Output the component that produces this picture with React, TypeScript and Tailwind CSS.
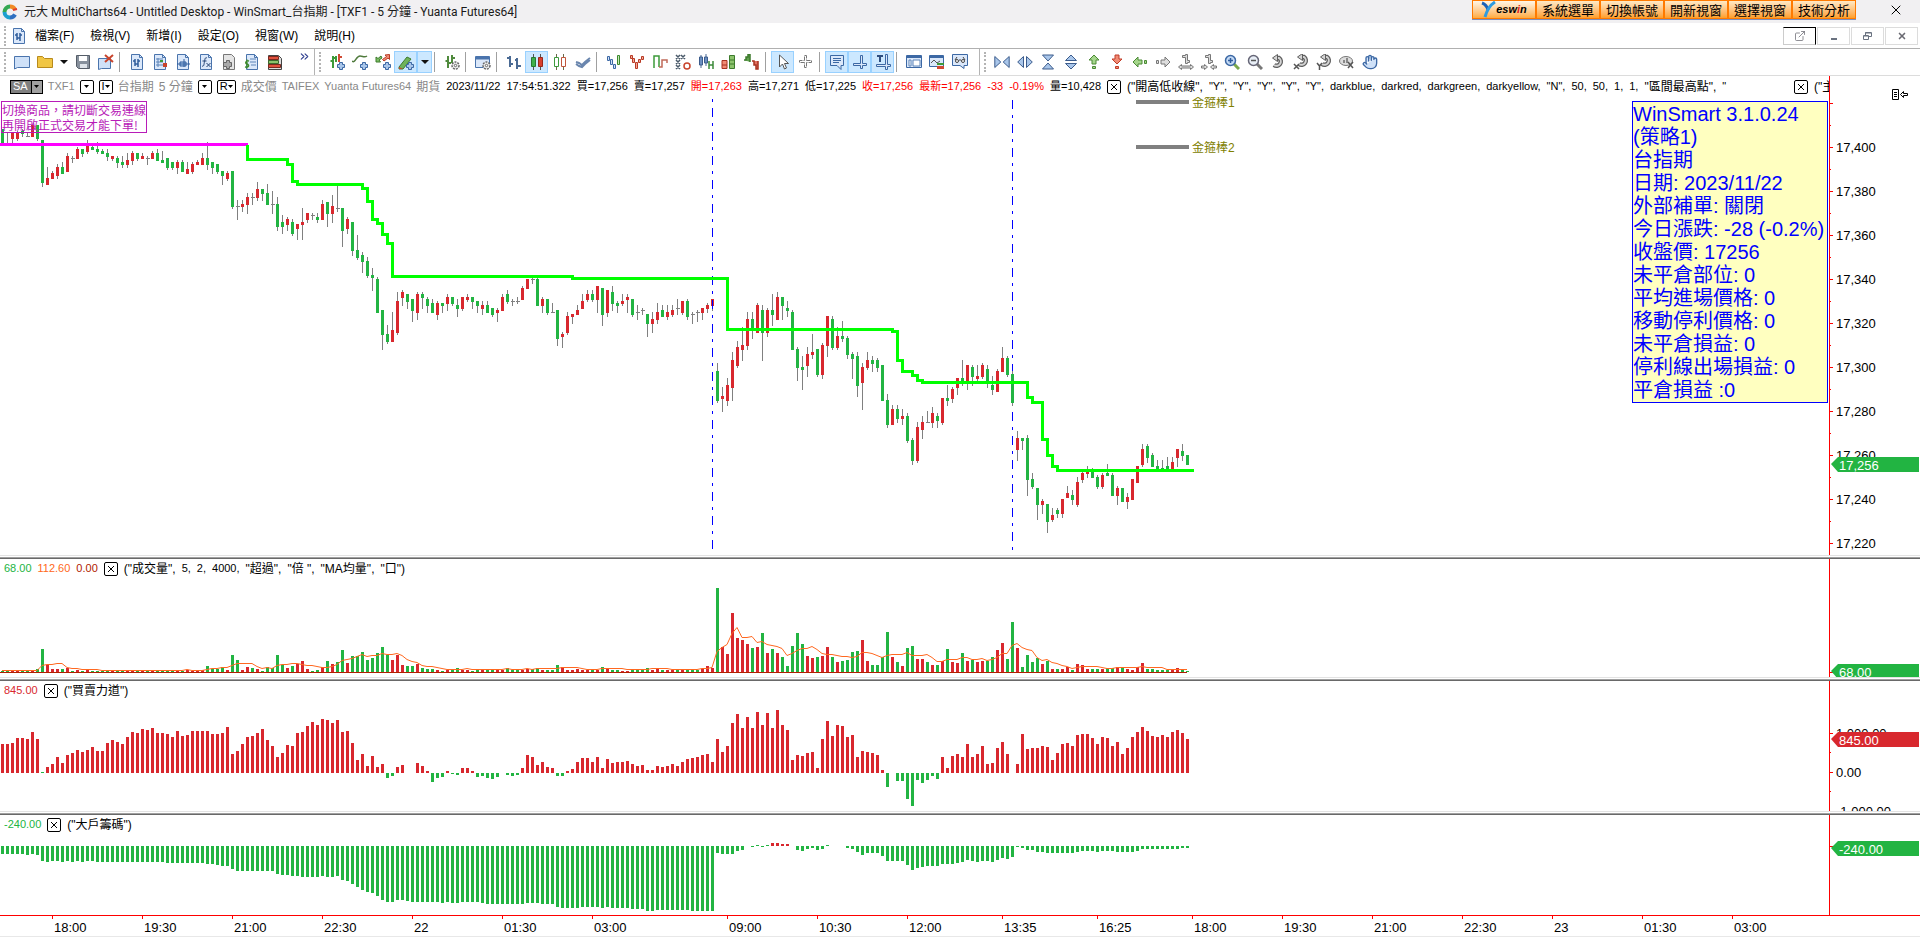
import React from 'react'
import { ChevronsRight, ExternalLink, Hand, X } from 'lucide-react'

const UP = '#d8282e'
const DOWN = '#22b442'
const STEP = 5
const AXIS_FONT = { fontFamily: '"Liberation Sans", Arial, sans-serif', fontSize: 13 }

/* ---------- data ---------- */

// Each bar: colour (r/g/d for doji), high, body top, body bottom, low, in thirds of a pixel below `base`
const CANDLE_RUNS = [
    {
        base: 120,
        bars: `g28,28,72,72 d35,68,68,70 r38,38,57,70 r33,38,57,62 g28,33,42,50 d35,49,49,50 r15,15,50,50 g15,15,57,63 g60,60,189,201 r140,174,195,195
r153,159,177,177 r132,141,168,177 g126,141,162,162 r99,108,156,156 d108,115,115,128 r81,87,117,117 g87,87,102,110 r60,76,96,102 g76,81,90,90 g66,87,96,102
g87,93,102,102 g87,99,111,123 r108,108,117,122 g108,114,129,144 g108,126,135,144 r99,120,135,144 r93,99,123,135 g99,99,117,123 r99,108,117,117 d108,115,115,135
r93,99,117,117 g87,99,123,123 g93,120,129,129 g114,114,144,150 g126,126,144,150 r120,126,144,162 g120,126,156,156 r126,147,162,162 r126,132,156,162 r120,126,135,135
r99,114,135,135 g66,114,135,150 g126,126,144,162 g132,132,156,162 g153,153,168,195 r153,159,177,183 g153,153,261,267 d240,259,259,300 r240,252,261,276 r219,231,255,282
d219,232,232,255 r186,207,234,243 g207,207,222,243 g192,219,255,255 d213,253,253,282 g231,252,321,333 g285,306,321,342 r291,297,315,333 g297,306,342,348 r312,312,327,360
r264,306,315,360 r279,279,300,309 d279,286,286,300 g279,291,300,308 r240,252,300,300 g246,246,282,321 r225,258,282,309 d195,265,265,276 g264,264,333,381 r291,297,327,342
g306,306,393,408 g345,390,414,420 g396,405,426,459 g411,423,468,474 g444,465,474,513 g471,477,579,579 g570,570,645,690 g615,642,666,672 r576,630,666,666 r516,543,639,645
r510,516,534,558 g522,522,546,567 g537,537,573,606 r516,522,579,600`,
    },
    {
        base: 220,
        bars: `g216,222,234,267 g231,237,258,279 g237,249,279,279 r243,249,285,300 g249,249,258,279 r222,231,252,273 g231,231,252,258 g237,255,267,291 r231,231,267,273 r222,231,240,246
g231,231,246,267 g243,243,258,279 r243,255,267,285 g243,255,279,279 g264,264,285,291 r264,270,279,306 r222,231,273,273 g210,222,246,252 d237,244,244,258 d231,244,244,252
r198,204,240,240 r177,177,207,207 d174,178,178,192 g174,177,258,258 r231,237,258,279 g237,237,279,285 d249,277,277,279 g270,270,357,378 r336,342,351,384 r276,288,339,345
r282,282,291,312 r255,270,285,285 r222,243,267,267 r210,222,240,246 g210,222,240,246 r198,198,240,279 g204,204,285,318 r210,210,279,291 g198,216,252,273 g243,249,258,279
r222,243,252,258 r222,231,240,279 g237,237,285,291 d255,277,277,300 d264,271,271,285 g282,282,312,351 r276,297,312,339 r249,276,300,312 g255,270,291,291 r255,276,291,300
r255,270,285,291 d237,265,265,285 r243,243,279,285 g237,243,291,300 d276,283,283,312 d270,277,277,306 r264,264,279,300 r249,255,267,279 r237,237,258,272 g429,453,543,549
r501,528,537,576 r474,495,543,558 r396,420,504,543 r363,381,438,444`,
    },
    {
        base: 240,
        bars: `r261,315,330,363 r216,237,318,330 g216,237,270,297 r189,195,279,279 g195,210,279,363 r204,210,279,291 g162,210,225,258 r156,171,240,240 g171,171,198,240 g183,204,213,231
g210,216,330,330 g321,327,384,423 g348,381,390,450 r321,342,378,411 r282,336,345,357 g327,327,405,411 r309,315,405,417 r228,228,318,351 g228,237,324,330 r261,288,324,330
g243,288,297,306 g288,294,345,357 g336,342,357,417 g336,348,438,471 r369,381,429,510 r336,360,384,390 g348,360,372,396 g354,360,384,396 g375,375,483,483 g462,480,555,564
r495,507,555,555 g495,507,537,549 r507,528,537,555 g519,528,603,609 g594,600,663,675 r546,561,663,669 r528,546,570,597 d513,547,547,549 r501,519,549,564 g519,528,543,564
r474,474,549,555 g435,474,483,498 r441,447,477,489 r414,414,444,465 g360,414,423,438 r375,375,429,450 g375,381,411,438 r375,408,417,423 r369,375,411,417 g375,387,426,444
g408,435,450,465 r387,393,456,456 r321,354,396,396 g348,354,405,411 g393,402,489,498 r573,594,630,663 g594,594,603,630 g585,594,720,768 g699,717,741,747 g744,744,795,840
r777,783,795,822 g792,792,846,879 r804,825,840,846 g804,810,822,834 r777,777,822,834 r738,759,774,774 g750,765,780,795 r711,726,795,801 r693,699,720,729 r678,693,702,714
g684,693,714,714 g705,711,741,747 r699,705,741,747 g672,699,708,708 g699,705,768,768 r738,744,768,795 g744,744,786,786 r759,771,786,807 r717,717,780,780 r678,678,729,729
r612,627,675,681 g612,618,654,669 g639,645,681,681 g660,678,693,693 g660,684,693,693 g651,678,693,693 r651,666,690,690 r627,627,654,681 g612,633,648,663 g645,645,675,675`,
    },
]

const CANDLES = CANDLE_RUNS.flatMap(({ base, bars }) =>
    bars.split(/\s+/).map((bar) => {
        const [high, top, bottom, low] = bar.slice(1).split(',').map((v) => Math.round(base + Number(v) / 3))
        return { kind: bar[0], high, top, bottom, low }
    })
)

const VOLUME = [
    1, 1, 1, 1, 1, 1, 1, 3, 23, 7, 3, 3, 3, 4, 1, 2, 1, 3, 1, 1, 1, 1, 1, 2, 2, 1, 1, 1, 1, 1, 1, 1, 1, 2, 1, 2, 1, 2, 1, 1,
    2, 6, 3, 3, 5, 2, 17, 12, 2, 5, 4, 3, 1, 5, 4, 17, 7, 4, 6, 8, 11, 3, 1, 2, 5, 11, 8, 10, 22, 9, 16, 16, 20, 12, 14, 19, 25, 17, 12, 17,
    7, 6, 6, 8, 4, 3, 3, 2, 1, 2, 3, 4, 2, 2, 1, 2, 2, 3, 2, 2, 2, 4, 2, 2, 2, 3, 3, 4, 2, 2, 2, 7, 5, 2, 2, 3, 2, 2, 2, 2,
    5, 3, 2, 2, 1, 1, 3, 2, 2, 4, 2, 4, 2, 2, 2, 2, 2, 3, 3, 2, 3, 6, 4, 84, 25, 18, 59, 34, 32, 28, 24, 25, 39, 19, 23, 19, 15, 6, 26, 39,
    28, 16, 14, 15, 16, 25, 15, 10, 11, 12, 20, 21, 32, 11, 7, 7, 15, 40, 15, 10, 6, 24, 26, 13, 13, 10, 7, 7, 11, 23, 10, 9, 19, 11, 12, 10, 11, 11, 15, 22,
    29, 13, 50, 24, 5, 17, 10, 14, 8, 11, 3, 3, 3, 5, 2, 8, 7, 3, 3, 3, 3, 4, 4, 5, 4, 3, 2, 5, 9, 3, 3, 2, 2, 2, 2, 4, 2, 1,
]

const FORCE = [
    29, 29, 30, 35, 35, 34, 41, 34, 1, 6, 9, 16, 10, 18, 20, 23, 21, 23, 26, 22, 22, 30, 33, 31, 29, 36, 41, 40, 44, 43, 45, 40, 40, 39, 36, 42, 37, 38, 42, 42,
    42, 42, 39, 39, 40, 46, 19, 22, 29, 36, 37, 40, 44, 33, 27, 16, 20, 28, 27, 40, 41, 47, 51, 48, 54, 53, 50, 53, 41, 42, 30, 13, 19, 7, 17, 6, 9, -5, -3, 6,
    8, 0, 0, 10, 7, 2, -9, -5, -4, 2, -1, -2, 5, 5, 2, -4, -3, -5, -6, -4, 0, -2, -3, -2, 5, 18, 16, 8, 11, 6, 5, -3, -3, 2, 4, 11, 15, 15, 11, 16,
    5, 14, 10, 11, 11, 12, 9, 7, 8, 3, 3, 7, 6, 7, 9, 7, 11, 14, 15, 16, 18, 19, 11, 34, 21, 27, 50, 59, 45, 56, 45, 61, 48, 60, 45, 63, 48, 43, 13, 18,
    17, 20, 21, 5, 34, 52, 37, 48, 47, 36, 38, 16, 22, 21, 20, 18, 3, -14, 0, -8, -8, -26, -33, -7, -10, -7, -3, -6, 16, 5, 17, 19, 16, 29, 16, 19, 27, 9, 10, 25,
    31, 19, 0, 9, 39, 24, 25, 25, 27, 26, 13, 20, 29, 30, 27, 38, 39, 39, 35, 29, 36, 35, 27, 31, 19, 25, 36, 41, 46, 42, 37, 36, 38, 36, 41, 43, 40, 34,
]

const CHIPS = [
    8, 8, 8, 8, 8, 9, 8, 9, 15, 16, 15, 15, 16, 15, 16, 15, 16, 15, 15, 16, 16, 16, 16, 16, 16, 16, 16, 16, 16, 16, 16, 16, 16, 17, 17, 17, 17, 17, 17, 17,
    17, 18, 18, 19, 20, 20, 23, 25, 25, 25, 25, 25, 25, 25, 25, 28, 29, 29, 30, 30, 31, 31, 31, 31, 30, 31, 31, 30, 34, 35, 38, 41, 44, 46, 47, 50, 54, 56, 56, 54,
    54, 55, 56, 56, 56, 56, 56, 56, 57, 56, 57, 57, 56, 56, 56, 56, 57, 58, 58, 58, 58, 58, 58, 58, 58, 57, 57, 57, 58, 58, 58, 61, 62, 62, 62, 62, 61, 61, 61, 61,
    62, 61, 62, 62, 62, 62, 63, 63, 63, 65, 65, 64, 64, 64, 64, 64, 64, 64, 65, 65, 65, 65, 65, 7, 8, 8, 8, 5, 4, 0, 1, -1, 1, -1, -3, -3, -2, -2, 0, 4,
    5, 3, 2, 4, 3, -1, 0, 0, 0, 2, 3, 6, 9, 7, 7, 7, 10, 15, 15, 15, 15, 19, 24, 22, 21, 20, 20, 20, 18, 18, 18, 17, 16, 14, 15, 16, 15, 15, 16, 14,
    12, 13, 11, 1, 2, 4, 4, 6, 6, 7, 7, 7, 7, 7, 7, 6, 5, 5, 5, 6, 5, 5, 5, 6, 6, 6, 6, 5, 3, 3, 3, 3, 3, 3, 3, 3, 2, 2,
]

const STOP_LINE: [number, number][] = [
    [247, 144], [247, 159], [287, 159], [287, 164], [292, 164], [292, 181], [297, 181], [297, 184], [362, 184], [362, 188], [367, 188],
    [367, 201], [372, 201], [372, 219], [377, 219], [377, 223], [382, 223], [382, 234], [387, 234], [387, 243], [392, 243], [392, 276],
    [572, 276], [572, 278], [727, 278], [727, 329], [892, 329], [892, 331], [897, 331], [897, 360], [902, 360], [902, 371], [912, 371],
    [912, 375], [917, 375], [917, 380], [922, 380], [922, 382], [1027, 382], [1027, 397], [1032, 397], [1032, 402], [1042, 402],
    [1042, 439], [1047, 439], [1047, 455], [1052, 455], [1052, 466], [1057, 466], [1057, 470], [1193, 470],
]

const TIMES: [number, string][] = [
    [52, '18:00'], [142, '19:30'], [232, '21:00'], [322, '22:30'], [412, '22'], [502, '01:30'], [592, '03:00'], [727, '09:00'], [817, '10:30'],
    [907, '12:00'], [1002, '13:35'], [1097, '16:25'], [1192, '18:00'], [1282, '19:30'], [1372, '21:00'], [1462, '22:30'], [1552, '23'],
    [1642, '01:30'], [1732, '03:00'],
]

const INFO_LINES = [
    'WinSmart 3.1.0.24', '(策略1)', '台指期', '日期: 2023/11/22', '外部補單: 關閉', '今日漲跌: -28 (-0.2%)', '收盤價: 17256',
    '未平倉部位: 0', '平均進場價格: 0', '移動停利價格: 0', '未平倉損益: 0', '停利線出場損益: 0', '平倉損益 :0',
]

/* ---------- toolbar icons ---------- */

const page = (
    <>
        <path d="M2.5.5h8l3 3v12h-11z" fill="#dbe8fa" stroke="#4a74ad" />
        <path d="M10.5.5v3h3" fill="none" stroke="#4a74ad" />
    </>
)
const plus = <path d="M10.5 8.5h3v2h2v3h-2v2h-3v-2h-2v-3h2z" fill="#a9c6ea" stroke="#3c68a4" />
const gear = (
    <>
        <circle cx="11.5" cy="11.5" r="3.5" fill="#eee" stroke="#666" strokeDasharray="2 1" strokeWidth="1.5" />
        <circle cx="11.5" cy="11.5" r="1.2" fill="#fff" stroke="#666" />
    </>
)
const rotate = (
    <g fill="none">
        <path d="M6 4h3a4 4 0 1 1-5 7" stroke="#5f5f5f" strokeWidth="4.500" />
        <path d="M6 4h3a4 4 0 1 1-5 7" stroke="#d4d4d4" strokeWidth="2" />
        <path d="M7.500.500v7L2.500 4z" fill="#d4d4d4" stroke="#5f5f5f" />
    </g>
)
const lens = (
    <>
        <path d="M10 10l5 5" stroke="#777" strokeWidth="3" />
        <circle cx="6.5" cy="6.5" r="5" fill="#e8eef6" stroke="#667" strokeWidth="1.5" />
    </>
)

const ICONS: Record<string, React.ReactNode> = {
    workspace: <path d="M.5 2.5h15v11H3.5l-3 1.5z" fill="#cfe1f8" stroke="#4a74ad" />,
    folder: <path d="M.5 2.5h5l2 2h8v9H.5z" fill="#f1c644" stroke="#b88a1c" />,
    save: (
        <>
            <path d="M1.5 1.5h13v13h-11l-2-2z" fill="#87909c" stroke="#555d68" />
            <path d="M4 2h8v5H4z" fill="#fff" />
            <path d="M5 10h7v4H5z" fill="#dfe4ea" />
        </>
    ),
    closeWorkspace: (
        <>
            <path d="M.5 4.5h12v10H3.5l-3 1z" fill="#cfe1f8" stroke="#4a74ad" />
            <path d="M7 1l8 7M15 1L7 8" stroke="#c8442c" strokeWidth="2" />
        </>
    ),
    chartPage: <>{page}<path d="M6 5v7M4 7h2M6 10h3M9 5v8M9 7h2" stroke="#2f5c9c" fill="none" strokeWidth="1.5" /></>,
    scanner: <>{page}<path d="M4 5h7M4 8h7M4 11h7M6 4v9" stroke="#5c84b8" /><path d="M8 6h3v2H8z" fill="#3d9a3a" /><path d="M11 9h4v4h-4z" fill="#c8442c" /></>,
    domPage: <>{page}<path d="M2 10h13M5 8h6v4H5zM9 5v8" stroke="#2f5c9c" fill="#a9c6ea" /></>,
    formula: <>{page}<path d="M9 4c-2-1-2 1-2.5 3.5S6 13 4 12M4.5 7h4M8.5 9l4 4M12.5 9l-4 4" stroke="#1f3f70" fill="none" /></>,
    plugin: (
        <>
            <path d="M2.5.5h8l3 3v12h-11z" fill="#e4e4e4" stroke="#777" />
            <path d="M2.500 8.500h3v-2h3v2h2v4h-2v2h-3v-2h-3z" fill="#aaa" stroke="#666" />
        </>
    ),
    report: <>{page}<path d="M6 5h6M6 8h6M7 11h5" stroke="#5c84b8" /><path d="M5 7c-4-1-4 3-2 3s3 4-2 3M3 5.5v9" stroke="#3d8a2a" fill="none" strokeWidth="1.3" /></>,
    book: (
        <>
            <path d="M1.5 1.5h10l3 3v11h-13z" fill="#ddd" stroke="#444" />
            <path d="M1.500 2.500h10v3h-10zM1.500 10.500h12v3h-12z" fill="#e0503c" stroke="#7a2a20" />
            <path d="M1.500 6.500h10v3h-10z" fill="#8cc36c" stroke="#3c6a2c" />
        </>
    ),
    addSymbol: <><path d="M4 2v12M1.5 7H4M4 4h3M7 2v6" stroke="#3d9a3a" strokeWidth="2" /><path d="M10 0v8M10 3h3" stroke="#d04a34" strokeWidth="2" />{plus}</>,
    addStudy: <><path d="M0 7c3 3 4-5 8-5 3 0 4 2 7 0" stroke="#4f7a3c" fill="none" strokeWidth="1.5" />{plus}</>,
    addSignal: (
        <>
            <path d="M1 8V3l2 1.500L6 2l1 2-3 2 1.500 2z" fill="#7cbf64" stroke="#3c7a2c" />
            <path d="M14.500.500v5l-1.500-1.500-4 3-1.500-1.500 4-3L10 1z" fill="#f08a74" stroke="#b83a24" />
            {plus}
        </>
    ),
    drawing: <><path d="M1 13L9 3l4 2-8 10H1z" fill="#6fb35a" stroke="#3c7a2c" /><path d="M1 13l4 2H1z" fill="#c8442c" />{plus}</>,
    formatSymbol: <><path d="M4 2v12M1.5 7H4M4 9h3M8 1v8M8 4h3" stroke="#4f8a3c" strokeWidth="2" />{gear}</>,
    formatWindow: <><path d="M.5 2.5h14v11H.5z" fill="#dbe8fa" stroke="#4a74ad" /><path d="M1 4h13" stroke="#4a74ad" strokeWidth="3" />{gear}</>,
    ohlc: <path d="M4 2v11M1 4h3M4 10h3M11 4v11M9 6h2M11 12h4" stroke="#4a6a94" strokeWidth="2" fill="none" />,
    candle: (
        <>
            <path d="M4.5 0v16M11.5 0v16" stroke="#555" />
            <path d="M2.5 3.5h4v9h-4z" fill="#3db04a" stroke="#287832" />
            <path d="M9.5 3.5h4v9h-4z" fill="#d8402e" stroke="#9a281a" />
        </>
    ),
    hollow: (
        <>
            <path d="M4.5 0v16M11.5 0v16" stroke="#6a6a4a" />
            <path d="M2.5 3.5h4v9h-4z" fill="#fff" stroke="#3c9a3c" />
            <path d="M9.5 3.5h4v9h-4z" fill="#fff" stroke="#c0563c" />
        </>
    ),
    line: <path d="M1 8l3 1 3 2 3-3 5-4M1 10l3 2 3 1 3-3 5-4" stroke="#6a86ae" strokeWidth="2" fill="none" />,
    kagi: <><path d="M1.500 2.500h2v4h-2zM4.500 5.500h2v5h-2zM7.500 10.500h2v4h-2z" fill="#cfe1f8" stroke="#3c68a4" /><path d="M11.500 1.500h2v9h-2z" fill="#c8e8bc" stroke="#3c8a2c" /></>,
    renko: <path d="M1.500 1.500h2v3h-2zM3.500 4.500h2v4h-2zM6.500 8.500h2v6h-2zM9.500 5.500h2v3h-2zM12.500 2.500h2v3h-2z" fill="#f4a898" stroke="#b83a24" />,
    kagiLine: <><path d="M2 14V2h5v11" fill="none" stroke="#3d9a3a" strokeWidth="1.5" /><path d="M7 13h3V6h5v3" fill="none" stroke="#c06a5a" strokeWidth="1.5" /></>,
    pointFigure: (
        <>
            <path d="M1 1l4 4M5 1L1 5M6 1l4 4M10 1L6 5M1 6l4 4M5 6l-4 4M1 11l4 4M5 11l-4 4" stroke="#4a5a6a" strokeWidth="1.500" />
            <circle cx="12" cy="12" r="3" fill="none" stroke="#c8442c" strokeWidth="1.5" />
        </>
    ),
    heikin: <><path d="M3 1v13M8 0v12" stroke="#4a6a94" /><path d="M1.5 3h3v8h-3zM6.5 3h3v6h-3z" fill="#6a8ec0" stroke="#3c5c8c" /><path d="M11 7v8M15 7v8M11 11h4" stroke="#3d8a3a" strokeWidth="1.5" /></>,
    priceBox: <><path d="M1 6.5h5v8H1zM1 11h5" fill="#f08a74" stroke="#a83220" /><path d="M8.500 1.5h5v13h-5zM9 6h5M9 10h5" fill="#8cc36c" stroke="#3c7a2c" /></>,
    delta: (
        <>
            <path d="M0 6h2V3h2v-3h2v8" fill="#5fa04c" stroke="#3c7a2c" strokeWidth="1.500" />
            <path d="M8 7h2v4h2v4h2V7" fill="#e07060" stroke="#a83220" strokeWidth="1.500" />
        </>
    ),
    pointer: <path d="M4.5 1v12l3-3 2 5 2-1-2-4.5h4z" fill="#fff" stroke="#555" />,
    cross: <path d="M6.500 1.500h2v5h5v2h-5v5h-2v-5h-5v-2h5z" fill="#fff" stroke="#777" strokeDasharray="5 1" />,
    note: <><path d="M1.5 1.5h13v10H12v4l-4-4H1.5z" fill="#dbe8fa" stroke="#3c68a4" /><path d="M4 4.5h8M4 6.5h8M4 8.5h6" stroke="#3c68a4" /></>,
    arrowPrice: <path d="M8.5 1.5h2v8h4v2h-4v3h-2v-3h-7v-2h7z" fill="#dbe8fa" stroke="#3c68a4" />,
    textArrow: <><path d="M10.5.5h2v10h3v2h-3v3h-2v-3h-9v-2h9z" fill="#dbe8fa" stroke="#3c68a4" /><path d="M2 2h6M5 2v6" stroke="#2f4f80" strokeWidth="2" /></>,
    dataWindow: <><path d="M.5 1.5h15v12H.5z" fill="#dbe8fa" stroke="#3c68a4" /><path d="M1 3h14" stroke="#3c68a4" strokeWidth="2" /><path d="M3 6h2v6H3zM7 6h7v6H7z" fill="#fff" stroke="#5c84b8" /></>,
    chartWindow: <><path d="M.5 1.5h14v11H.5z" fill="#dbe8fa" stroke="#3c68a4" /><path d="M1 3h13" stroke="#3c68a4" strokeWidth="2" /><path d="M2 9l3-3 3 3 3-2" stroke="#555" fill="none" /><path d="M8 9h7v2H8z" fill="#3d9a3a" /><path d="M8 12h7v3H8z" fill="#d04a34" /></>,
    watch: <><path d="M.5.5h15v11H12v3l-4-3H.5z" fill="#dbe8fa" stroke="#3c68a4" /><path d="M3 6l2-3M13 6l-2-3M7 6h2" stroke="#444" fill="none" /><circle cx="5" cy="7" r="1.5" fill="#fff" stroke="#444" /><circle cx="11" cy="7" r="1.5" fill="#fff" stroke="#444" /></>,
    shrinkX: <path d="M.8 2.5v11l6-5.5zM15.2 2.5v11l-6-5.5z" fill="#a9c6ea" stroke="#3c5c8c" />,
    growX: <path d="M6.5 2.5v11L.7 8zM9.5 2.5v11l5.8-5.5z" fill="#a9c6ea" stroke="#3c5c8c" />,
    shrinkY: <path d="M2.5 1h11l-5.5 6zM2.5 15h11L8 9z" fill="#a9c6ea" stroke="#3c5c8c" />,
    growY: <path d="M2.5 6.5h11L8 1zM2.5 9.5h11L8 15z" fill="#a9c6ea" stroke="#3c5c8c" />,
    up: <path d="M8 1l5 5h-3v4H6V6H3zM6.5 12.5h3v2h-3z" fill="#a5d68c" stroke="#4a8a34" />,
    downArrow: <path d="M8 10L3 5h3V1h4v4h3zM6.5 12.5h3v2h-3z" fill="#f08a74" stroke="#c03c28" />,
    left: <path d="M1 8l5-5v3h4v4H6v3zM12.5 6.5h2v3h-2z" fill="#a5d68c" stroke="#4a8a34" />,
    right: <path d="M15 8l-5-5v3H6v4h4v3zM1.5 6.5h2v3h-2z" fill="#ddd" stroke="#777" />,
    barWide: (
        <>
            <path d="M7.500.500h2v6h2v2h-2v1h-2v-6h-3v-2h3z" fill="#ddd" stroke="#777" />
            <path d="M.5 13l3-2.500v1.500h9v-1.500l3 2.500-3 2.500V14h-9v1.500z" fill="#ddd" stroke="#777" />
        </>
    ),
    barNarrow: (
        <>
            <path d="M7.500.500h2v6h2v2h-2v1h-2v-6h-3v-2h3z" fill="#ddd" stroke="#777" />
            <path d="M.5 12h3v-1.500L6.500 13l-3 2.500V14h-3zM15.500 12h-3v-1.500L9.500 13l3 2.500V14h3z" fill="#ddd" stroke="#777" />
        </>
    ),
    zoomIn: <><path d="M10 10l5 5" stroke="#7aa84c" strokeWidth="3" /><circle cx="6.5" cy="6.5" r="5" fill="#c4daf5" stroke="#3c68a4" strokeWidth="1.5" /><path d="M4 6.5h5M6.5 4v5" stroke="#2f5c9c" strokeWidth="1.5" /></>,
    zoomOut: <>{lens}<path d="M4 6.5h5" stroke="#555" strokeWidth="1.5" /></>,
    reset: rotate,
    resetX: <><g transform="translate(2 -1)">{rotate}</g><path d="M1 10l5 5M6 10l-5 5" stroke="#555" strokeWidth="1.5" /></>,
    resetY: <><g transform="translate(2 -1)">{rotate}</g><path d="M1 9l2.5 3L6 9M3.5 12v4" stroke="#555" strokeWidth="1.5" fill="none" /></>,
    hide: <><ellipse cx="7" cy="7" rx="6.5" ry="4.5" fill="#ddd" stroke="#777" /><path d="M4 9V6h2v3M7 9V4h2v5" fill="#888" /><path d="M9 8l5 6M14 8l-5 6" stroke="#555" strokeWidth="1.5" /></>,
}

const LEFT_TOOLS = ['workspace', 'folder', '>', 'save', 'closeWorkspace', '|', 'chartPage', 'scanner', 'domPage', 'formula', 'plugin', 'report', 'book']
const MID_TOOLS = [
    'addSymbol', 'addStudy', 'addSignal', 'drawing*', '>*', '|', 'formatSymbol', '|', 'formatWindow', '|', 'ohlc', 'candle*', 'hollow', 'line', '|',
    'kagi', 'renko', 'kagiLine', 'pointFigure', 'heikin', 'priceBox', 'delta', '|', 'pointer*', 'cross', '|', 'note*', 'arrowPrice*', 'textArrow*', '|',
    'dataWindow', 'chartWindow', 'watch',
]
const RIGHT_TOOLS = [
    'shrinkX', 'growX', 'shrinkY', 'growY', 'up', 'downArrow', 'left', 'right', 'barWide', 'barNarrow', 'zoomIn', 'zoomOut', 'reset', 'resetX', 'resetY', 'hide', 'hand',
]

const Tools = ({ items }: { items: string[] }) => (
    <>
        {items.map((item, i) => {
            const active = item.endsWith('*')
            const name = item.replace('*', '')
            if (name === '|') return <span key={i} className="ml-[2px] mr-[5px] h-5 w-px shrink-0 bg-[#a0a0a0]" />
            return (
                <button
                    key={i}
                    aria-label={name === '>' ? 'more' : name}
                    className={`flex h-[22px] shrink-0 items-center justify-center border ${name === '>' ? 'w-[15px]' : 'w-[23px]'} ${
                        active ? 'border-[#99d1ff] bg-[#cce8ff]' : 'border-transparent'
                    }`}
                >
                    {name === '>' ? (
                        <svg width="8" height="4"><path d="M0 0h8l-4 4z" fill="#111" /></svg>
                    ) : name === 'hand' ? (
                        <Hand size={16} color="#3c68a4" fill="#cfe1f8" strokeWidth={2} />
                    ) : (
                        <svg width="16" height="16" viewBox="0 0 16 16">{ICONS[name]}</svg>
                    )}
                </button>
            )
        })}
    </>
)

const Grip = () => <span className="mx-1 h-5 shrink-0 border-l-2 border-dotted border-[#b4b4b4]" />

/* ---------- window chrome ---------- */

const TitleBar = () => (
    <header className="flex h-[23px] items-start justify-between bg-[#f1f0f2]">
        <div className="flex h-[23px] items-center gap-1.5 pl-[2px] text-[12px] text-[#1a1a1a] font-[Roboto,'Noto_Sans_CJK_TC',sans-serif]">
            <svg width="16" height="16" viewBox="0 0 16 16" fill="none" strokeWidth="4">
                <path d="M8 2.5A5.5 5.5 0 0 0 2.5 8" stroke="#35a853" />
                <path d="M2.5 8A5.5 5.5 0 0 0 8 13.5" stroke="#1c9fd0" />
                <path d="M8 13.5a5.5 5.5 0 0 0 5-3" stroke="#2f6fc0" />
                <path d="M8 2.5a5.5 5.5 0 0 1 5 3" stroke="#f08a24" />
                <path d="M11 6l4-1" stroke="#e23c2c" strokeWidth="2" />
            </svg>
            <span className="whitespace-nowrap">元大 MultiCharts64 - Untitled Desktop - WinSmart_台指期 - [TXF1 - 5 分鐘 - Yuanta Futures64]</span>
        </div>
        <div className="flex items-center">
            <div className="flex border-b border-[#7a8fc0] font-['Noto_Sans_CJK_TC',sans-serif]">
                <button className="flex h-[19px] w-16 items-center justify-center border border-[#ff7a00] bg-gradient-to-b from-[#fff6e6] to-[#ffab3c] text-[11px] font-black italic leading-none text-black font-['Liberation_Sans',sans-serif]">
                    <svg width="15" height="17" viewBox="0 0 15 17" fill="none">
                        <path d="M1 2c3 1 5 3 6 7" stroke="#1c62b8" strokeWidth="3" />
                        <path d="M14 1C9 4 6 9 4 16" stroke="#2f9be0" strokeWidth="3" />
                    </svg>
                    <span>esw<span className="text-[#e02020]">i</span>n</span>
                </button>
                {['系統選單', '切換帳號', '開新視窗', '選擇視窗', '技術分析'].map((label) => (
                    <button
                        key={label}
                        className="flex h-[19px] w-16 items-center justify-center border border-[#ff7a00] bg-gradient-to-b from-[#ffe9c4] to-[#ff9f24] text-[13px] leading-none text-black"
                    >
                        {label}
                    </button>
                ))}
            </div>
            <button aria-label="close window" className="flex w-16 items-center justify-center pl-4">
                <X size={16} strokeWidth={1.5} />
            </button>
        </div>
    </header>
)

const MdiButton = ({ label, dark, children }: { label: string; dark?: boolean; children: React.ReactNode }) => (
    <button
        aria-label={label}
        className={`flex h-[18px] w-[33px] items-center justify-center border text-[#6a6a72] ${dark ? 'border-black border-b-[#ccc] border-l-[#ccc]' : 'border-[#dcdcdc]'}`}
    >
        {children}
    </button>
)

const MenuBar = () => (
    <nav className="flex h-[25px] items-center justify-between bg-white pr-[2px] text-[12px] text-black font-['Liberation_Sans','Noto_Sans_CJK_TC',sans-serif]">
        <div className="flex items-center">
            <Grip />
            <svg className="ml-px" width="16" height="16" viewBox="0 0 16 16">{ICONS.chartPage}</svg>
            <div className="ml-2 flex gap-4">
                {['檔案(F)', '檢視(V)', '新增(I)', '設定(O)', '視窗(W)', '說明(H)'].map((m) => (
                    <button key={m} className="whitespace-nowrap">{m}</button>
                ))}
            </div>
        </div>
        <div className="flex gap-px">
            <MdiButton label="detach" dark><ExternalLink size={12} strokeWidth={1.5} /></MdiButton>
            <MdiButton label="minimize"><span className="mt-1.5 h-[2px] w-1.5 bg-[#6a7280]" /></MdiButton>
            <MdiButton label="restore">
                <svg width="9" height="8" fill="none" stroke="#6a7280"><path d="M2.5 3V.5h6v4H6M.5 3.5h5v4h-5zM2 1h6M1 4h4" /></svg>
            </MdiButton>
            <MdiButton label="close"><X size={10} strokeWidth={4} /></MdiButton>
        </div>
    </nav>
)

const ToolBar = () => (
    <div className="flex h-[26px] items-center overflow-hidden bg-white">
        <Grip />
        <Tools items={LEFT_TOOLS} />
        <button aria-label="more tools" className="ml-3 mb-3 mr-[3px] shrink-0"><ChevronsRight size={13} color="#2f3f90" strokeWidth={2} /></button>
        <span className="h-full w-px shrink-0 bg-[#b4b4b4]" />
        <Grip />
        <Tools items={MID_TOOLS} />
        <span className="ml-2 h-full w-px shrink-0 bg-[#b4b4b4]" />
        <Grip />
        <Tools items={RIGHT_TOOLS} />
    </div>
)

/* ---------- chart parts ---------- */

const CrossBox = () => (
    <button aria-label="hide study" className="flex h-[14px] w-[14px] shrink-0 items-center justify-center rounded-[2px] border border-black text-black">
        <svg width="6" height="6"><path d="M0 0l6 6M6 0L0 6" stroke="#000" /></svg>
    </button>
)

const DropBox = ({ children }: { children?: React.ReactNode }) => (
    <button aria-label="select" className="flex h-[14px] min-w-[14px] shrink-0 items-center justify-center rounded-[2px] border border-black px-[2px] leading-none text-black">
        {children}
        <svg width="5" height="3"><path d="M0 0h5L2.5 3z" fill="#000" /></svg>
    </button>
)

const Legend = ({ children }: { children: React.ReactNode }) => (
    <div className="flex h-5 items-center gap-[6px] overflow-hidden whitespace-nowrap pl-1 pb-px text-[11px] leading-none text-black font-['Liberation_Sans','Noto_Sans_CJK_TC',sans-serif]">
        {children}
    </div>
)

// Chinese study inputs are set one size larger than the latin ones
const Inputs = ({ items }: { items: string[] }) => (
    <>
        {items.map((t, i) => (
            <span key={i} className={/[\u4e00-\u9fff]/.test(t) ? 'text-[12px] text-black' : 'text-black'}>{t}</span>
        ))}
    </>
)

const Splitter = () => (
    <div className="border-t border-[#e3e3e3] pt-px">
        <div className="border-b border-t border-b-[#696969] border-t-[#a0a0a0]" />
    </div>
)

const Ticks = ({ majors, minors = [] }: { majors: number[]; minors?: number[] }) => (
    <>
        {majors.map((y) => <rect key={y} x="0" y={y} width="3" height="1" fill="red" />)}
        {minors.map((y) => <rect key={y} x="0" y={y} width="1" height="1" fill="red" />)}
    </>
)

const PriceTag = ({ y, color, label }: { y: number; color: string; label: string }) => (
    <g>
        <path d={`M1 ${y + 7}l7 -7h81v15h-81z`} fill={color} />
        <text x="9" y={y + 13} fill="#fff" {...AXIS_FONT}>{label}</text>
    </g>
)

const Pane = ({ legend, children, axis }: { legend: React.ReactNode; children: React.ReactNode; axis: React.ReactNode }) => (
    <section className="flex">
        <div className="relative min-w-0 flex-1 overflow-hidden">
            {legend}
            {children}
        </div>
        <div className="relative w-[91px] shrink-0 border-l border-[#f00]">
            <svg className="absolute inset-0 h-full w-full">{axis}</svg>
        </div>
    </section>
)

const Bars = ({ values, base, colorOf, sign = 1 }: { values: number[]; base: number; colorOf: (v: number, i: number) => string; sign?: number }) => (
    <>
        {values.map((v, i) => (
            <rect key={i} x={1 + i * STEP} y={v * sign > 0 ? base - Math.abs(v) : base} width="3" height={Math.abs(v)} fill={colorOf(v, i)} />
        ))}
    </>
)

const volumeAverage = VOLUME.map((_, i) => {
    const span = VOLUME.slice(Math.max(0, i - 4), i + 1)
    return span.reduce((a, b) => a + b, 0) / span.length
})

const PriceChart = () => (
    <svg className="block h-[458px] w-full" shapeRendering="crispEdges">
        <g transform="translate(0 -97)">
            <path d="M1012.5 100V550" stroke="#00f" strokeDasharray="9 6 3 6" />
            {CANDLES.map(({ kind, high, top, bottom, low }, i) => {
                const x = 2 + i * STEP
                return (
                    <g key={i}>
                        <rect x={x} y={high} width="1" height={low - high} fill="#808080" />
                        {kind === 'd' ? (
                            <rect x={x - 1} y={top} width="4" height="1" fill="#808080" />
                        ) : (
                            <rect x={x - 1} y={top} width="3" height={bottom - top} fill={kind === 'r' ? UP : DOWN} />
                        )}
                    </g>
                )
            })}
            <path d="M712.5 84V549" stroke="#00f" strokeDasharray="9 6 3 6" />
            <rect x="0" y="143" width="248" height="3" fill="#f0f" />
            <polyline points={STOP_LINE.map(([x, y]) => `${x + 0.5},${y + 0.5}`).join(' ')} fill="none" stroke="#0f0" strokeWidth="3" strokeLinejoin="round" />
            <rect x="1136" y="100" width="53" height="4" fill="#808080" />
            <rect x="1136" y="145" width="53" height="4" fill="#808080" />
            <g fill="#808000" fontSize="12" fontFamily='"Liberation Sans", "Noto Sans CJK TC", sans-serif'>
                <text x="1192" y="107">金箍棒1</text>
                <text x="1192" y="152">金箍棒2</text>
            </g>
        </g>
    </svg>
)

const StatusLine = () => (
    <div className="flex h-[21px] items-center gap-[6px] overflow-hidden whitespace-nowrap pl-[10px] text-[11px] leading-none text-[#888] font-['Liberation_Sans','Noto_Sans_CJK_TC',sans-serif]">
        <div className="flex shrink-0 items-center gap-[5px]">
            <button className="flex h-[14px] shrink-0 items-center border border-black bg-[#808080] pl-[2px] text-white">
                SA
                <span className="ml-[3px] flex h-full w-[11px] items-center justify-center border-l border-black bg-[#a0a0a0]">
                    <svg width="5" height="3"><path d="M0 0h5L2.5 3z" fill="#000" /></svg>
                </span>
            </button>
            <span>TXF1</span>
            <DropBox />
            <DropBox>I</DropBox>
            <span className="text-[12px]">台指期</span>
            <span className="text-[12px]">5 分鐘</span>
            <DropBox />
            <DropBox>R</DropBox>
            <span className="text-[12px]">成交價</span>
            <span>TAIFEX</span>
            <span>Yuanta Futures64</span>
            <span className="text-[12px]">期貨</span>
        </div>
        <span className="text-black">2023/11/22</span>
        <span className="text-black">17:54:51.322</span>
        <span className="text-black">買=17,256</span>
        <span className="text-black">賣=17,257</span>
        <span className="text-[#f00]">開=17,263</span>
        <span className="text-black">高=17,271</span>
        <span className="text-black">低=17,225</span>
        <span className="text-[#f00]">收=17,256</span>
        <span className="text-[#f00]">最新=17,256</span>
        <span className="text-[#f00]">-33</span>
        <span className="text-[#f00]">-0.19%</span>
        <span className="text-black">量=10,428</span>
        <CrossBox />
        <Inputs items={['("開高低收線",', '"Y",', '"Y",', '"Y",', '"Y",', '"Y",', 'darkblue,', 'darkred,', 'darkgreen,', 'darkyellow,', '"N",', '50,', '50,', '1,', '1,', '"區間最高點",', '"']} />
        <span className="ml-auto flex w-[35px] shrink-0 items-center gap-[6px] overflow-hidden text-black">
            <CrossBox />
            <span className="text-[12px]">("主</span>
        </span>
    </div>
)

const TimeAxis = () => (
    <footer className="border-t border-[#f00]">
        <svg className="block h-[21px] w-full border-b border-[#e8e8e8]">
            {TIMES.map(([x, label]) => (
                <g key={x}>
                    <rect x={x} y="0" width="1" height="3" fill="red" />
                    <text x={x + 2} y="16" {...AXIS_FONT}>{label}</text>
                </g>
            ))}
        </svg>
    </footer>
)

const PRICES = [17400, 17380, 17360, 17340, 17320, 17300, 17280, 17260, 17240, 17220]

export default function App() {
    return (
        <div className="flex min-h-screen flex-col bg-white">
            <TitleBar />
            <MenuBar />
            <div className="border-y border-b-[#dcdcdc] border-t-[#b0b0b0]">
                <ToolBar />
            </div>

            <main>
                <Pane
                    legend={<StatusLine />}
                    axis={
                        <>
                            <Ticks majors={[27, ...PRICES.map((_, i) => 71 + i * 44)]} minors={PRICES.map((_, i) => 49 + i * 44)} />
                            {PRICES.map((p, i) => (
                                <text key={p} x="6" y={76 + i * 44} {...AXIS_FONT}>{p.toLocaleString('en-US')}</text>
                            ))}
                            <PriceTag y={381} color={DOWN} label="17,256" />
                            <g fill="none" stroke="#000">
                                <path d="M62.5 13.5h6v10h-6zM64 16.5h3M64 18.5h3M64 20.5h3" />
                                <path d="M70.500 18.5l3-3v2h4v2h-4v2z" />
                            </g>
                        </>
                    }
                >
                    <PriceChart />
                    <div className="absolute left-px top-[25px] whitespace-nowrap border border-[#b81cb8] text-[12px] leading-[15px] text-[#b81cb8] font-['Noto_Sans_CJK_TC',sans-serif]">
                        切換商品，請切斷交易連線
                        <br />
                        再開啟正式交易才能下單!
                    </div>
                    <div className="absolute right-px top-[25px] w-[196px] whitespace-nowrap border border-[#00f] bg-[#ffffc0] pt-px text-[20px] leading-[23px] text-[#00f] font-['Liberation_Sans','Noto_Sans_CJK_TC',sans-serif]">
                        {INFO_LINES.map((t) => <p key={t} className="h-[23px]">{t}</p>)}
                    </div>
                </Pane>
                <Splitter />

                <Pane
                    legend={
                        <Legend>
                            <span className="text-[#22b442]">68.00</span>
                            <span className="text-[#ff6820]">112.60</span>
                            <span className="text-[#b02000]">0.00</span>
                            <CrossBox />
                            <Inputs items={['("成交量",', '5,', '2,', '4000,', '"超過",', '"倍 ",', '"MA均量",', '"口")']} />
                        </Legend>
                    }
                    axis={
                        <>
                            <Ticks majors={[113]} />
                            <PriceTag y={105} color={DOWN} label="68.00" />
                        </>
                    }
                >
                    <svg className="block h-[98px] w-full">
                        <Bars values={VOLUME} base={93} colorOf={(_, i) => (CANDLES[i].kind === 'r' ? UP : DOWN)} />
                        <polyline points={volumeAverage.map((v, i) => `${i * STEP + 2},${93 - Math.round(v) - 0.5}`).join(' ')} fill="none" stroke="#ff6820" />
                        <rect x="0" y="93" width="1187" height="1" fill="#b02000" />
                    </svg>
                </Pane>
                <Splitter />

                <Pane
                    legend={
                        <Legend>
                            <span className="text-[#d8282e]">845.00</span>
                            <CrossBox />
                            <Inputs items={['("買賣力道")']} />
                        </Legend>
                    }
                    axis={
                        <>
                            <Ticks majors={[52, 91]} minors={[71, 110]} />
                            <text x="6" y="57" {...AXIS_FONT}>1,000.00</text>
                            <text x="6" y="96" {...AXIS_FONT}>0.00</text>
                            <text x="6" y="135" {...AXIS_FONT}>-1,000.00</text>
                            <PriceTag y={51} color={UP} label="845.00" />
                        </>
                    }
                >
                    <svg className="block h-[110px] w-full">
                        <Bars values={FORCE} base={72} colorOf={(v) => (v > 1 ? UP : DOWN)} />
                    </svg>
                </Pane>
                <Splitter />

                <Pane
                    legend={
                        <Legend>
                            <span className="text-[#22b442]">-240.00</span>
                            <CrossBox />
                            <Inputs items={['("大戶籌碼")']} />
                        </Legend>
                    }
                    axis={
                        <>
                            <Ticks majors={[31]} />
                            <text x="6" y="36" {...AXIS_FONT}>0.00</text>
                            <PriceTag y={26} color={DOWN} label="-240.00" />
                        </>
                    }
                >
                    <svg className="block h-20 w-full">
                        <Bars values={CHIPS} base={11} sign={-1} colorOf={(v) => (v < -1 ? UP : DOWN)} />
                    </svg>
                </Pane>
            </main>
            <TimeAxis />
        </div>
    )
}
